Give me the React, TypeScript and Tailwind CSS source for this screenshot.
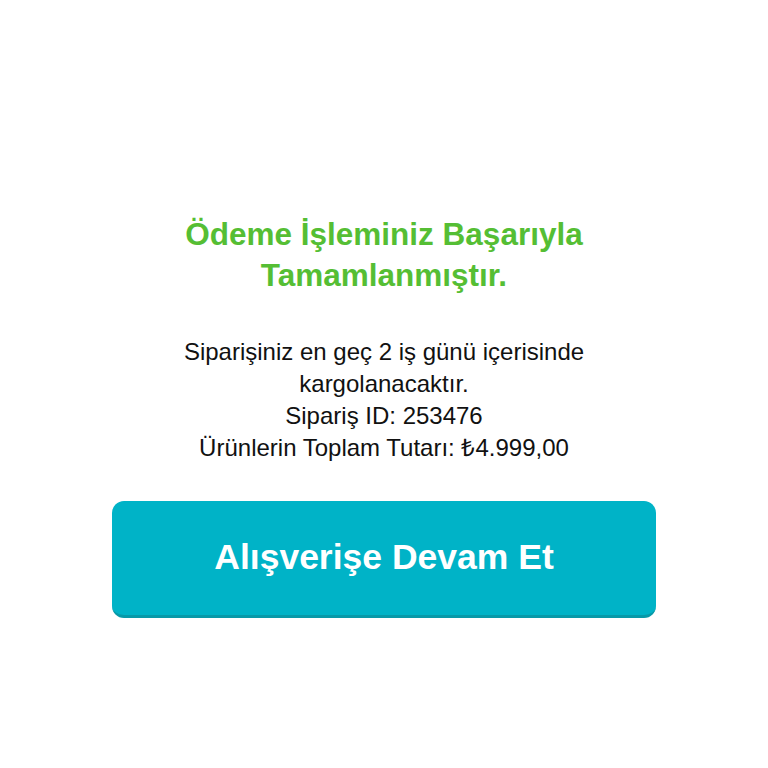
import React from 'react';

export default function App() {
  return (
    <div className="min-h-screen bg-white flex flex-col items-center pt-[214px] font-['Liberation_Sans',Arial,sans-serif]">
      {/* Başlık */}
      <h1 className="w-[460px] text-center text-[31.5px] leading-[41px] font-bold text-[#55be34]">
        Ödeme İşleminiz Başarıyla Tamamlanmıştır.
      </h1>

      {/* Sipariş bilgisi */}
      <div className="w-[460px] mt-[40px] text-center text-[24px] leading-[32px] text-[#111111]">
        <p>Siparişiniz en geç 2 iş günü içerisinde kargolanacaktır.</p>
        <p>Sipariş ID: 253476</p>
        <p>Ürünlerin Toplam Tutarı: ₺4.999,00</p>
      </div>

      {/* Buton */}
      <button className="mt-[37px] w-[544px] h-[117px] rounded-[12px] bg-[#00b3c7] border-b-[3px] border-[#0799a8] text-white text-[35.5px] font-bold">
        Alışverişe Devam Et
      </button>
    </div>
  );
}
